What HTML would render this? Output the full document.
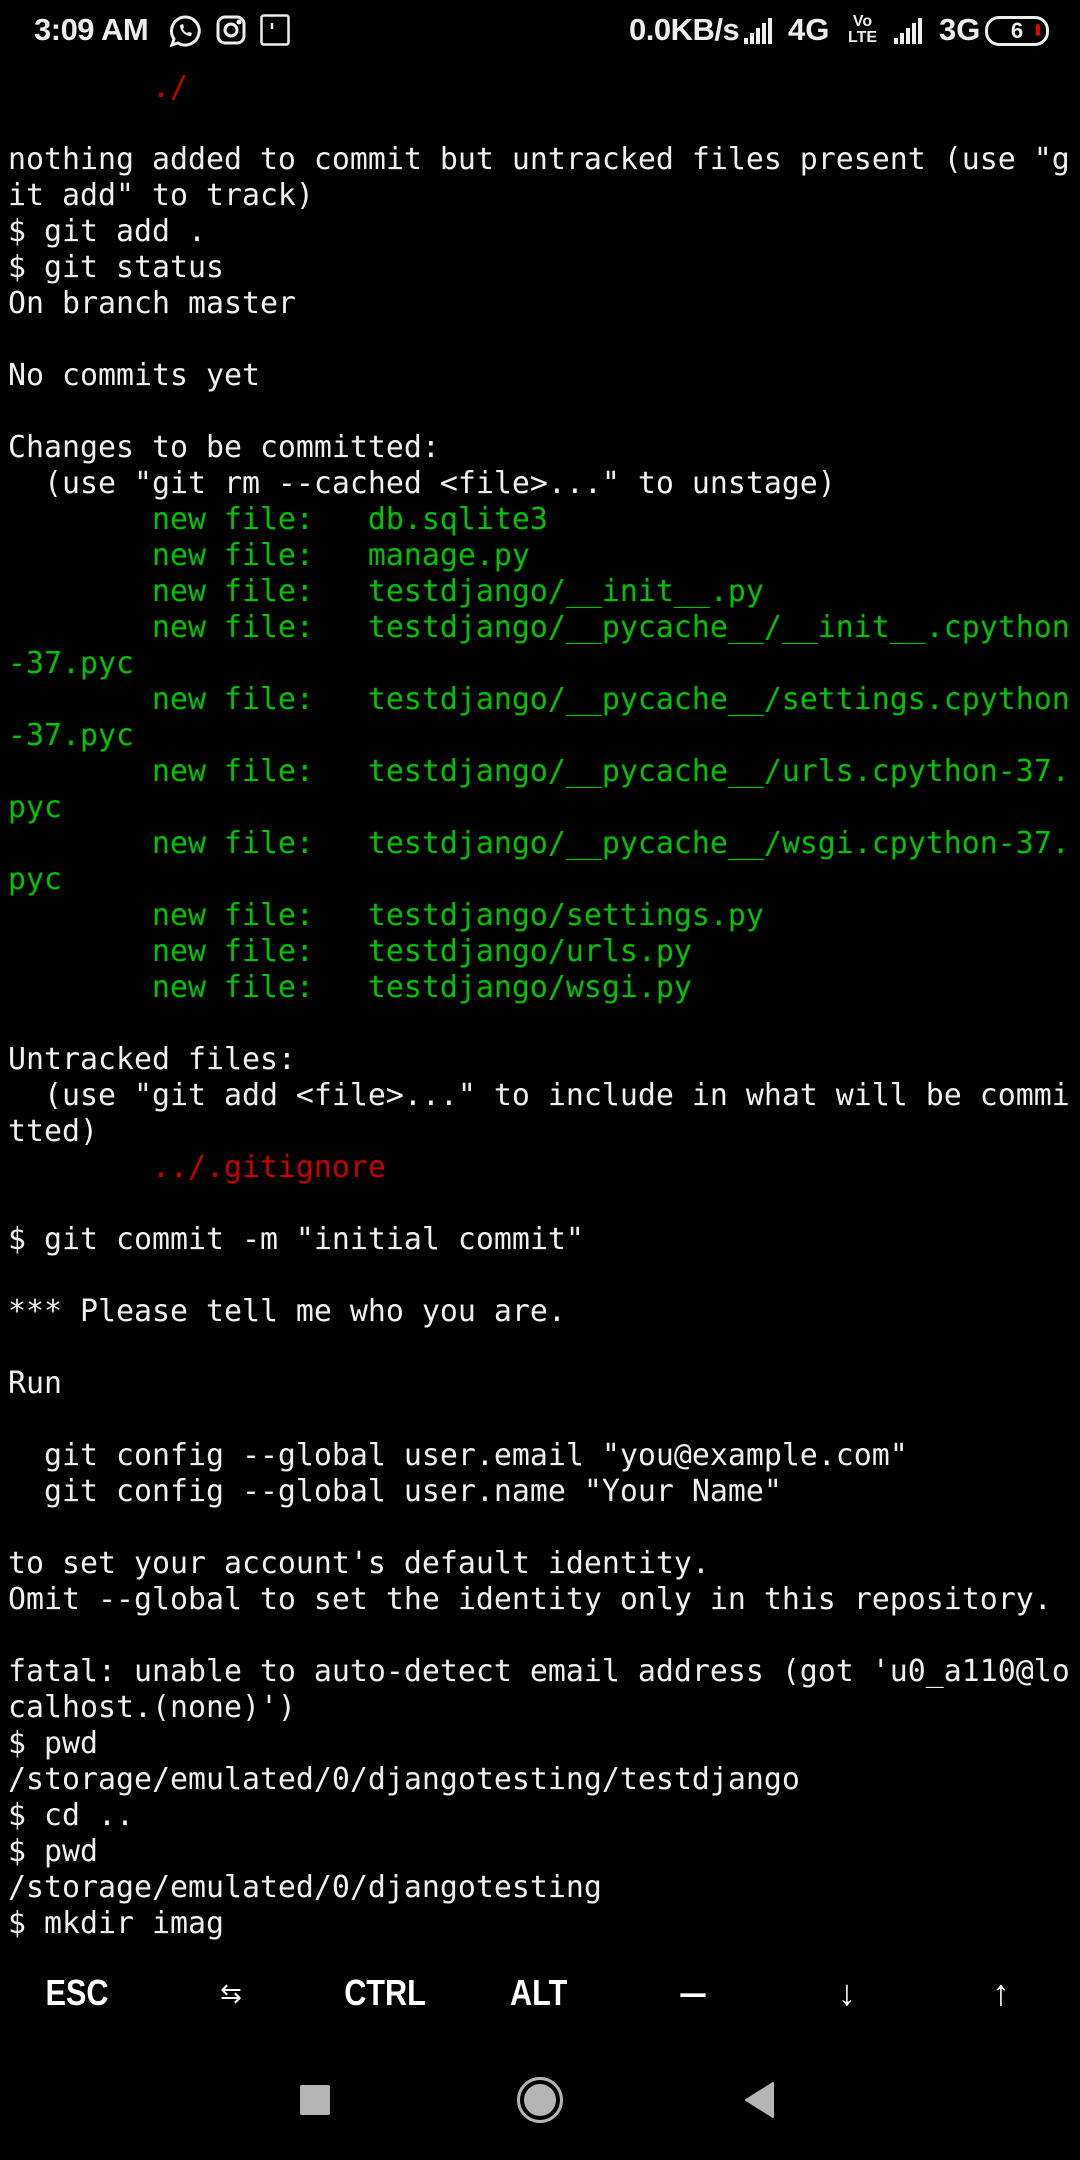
<!DOCTYPE html>
<html><head><meta charset="utf-8"><style>
html,body{margin:0;padding:0;background:#000;}
body{width:1080px;height:2160px;position:relative;overflow:hidden;font-family:"Liberation Sans",sans-serif;color:#fff;}
pre{position:absolute;left:8px;top:70px;margin:0;font-family:"DejaVu Sans Mono","Liberation Mono",monospace;font-size:29.9px;line-height:36px;color:#f0f0f0;}
.g{color:#00c400}.r{color:#c80000}
.sb{position:absolute;top:10px;height:40px;font-size:31px;font-weight:bold;color:#eee;line-height:40px;}
.k{position:absolute;top:1970px;width:154px;text-align:center;font-size:36px;font-weight:bold;line-height:46px;color:#fff;}
.k span{display:inline-block;transform:scaleX(0.85);}
</style></head><body>
<div class="sb" style="left:34px;letter-spacing:-0.5px">3:09 AM</div>
<svg style="position:absolute;left:168px;top:14px" width="34" height="34" viewBox="0 0 34 34" fill="none" stroke="#eee" stroke-width="3"><path d="M17 3a14 14 0 1 1-7 26l-6 2 2-6A14 14 0 0 1 17 3z"/><path d="M12 11c0 6 5 11 11 11l1-3-3-1-2 1c-2-1-3-2-4-4l1-2-1-3z" fill="#eee" stroke="none"/></svg>
<svg style="position:absolute;left:216px;top:15px" width="30" height="30" viewBox="0 0 30 30" fill="none" stroke="#eee" stroke-width="3"><rect x="2" y="2" width="26" height="26" rx="7"/><circle cx="15" cy="15" r="6"/><circle cx="23" cy="7" r="1" fill="#eee"/></svg>
<svg style="position:absolute;left:260px;top:14px" width="30" height="32" viewBox="0 0 30 32" fill="none" stroke="#eee" stroke-width="2.5"><rect x="1.5" y="1.5" width="27" height="29" rx="2"/><path d="M12 9v6"/></svg>
<div class="sb" style="left:629px;letter-spacing:-0.5px">0.0KB/s</div>
<svg style="position:absolute;left:744px;top:16px" width="36" height="28" viewBox="0 0 36 28" fill="#eee"><rect x="0" y="22" width="4" height="6"/><rect x="6" y="17" width="4" height="11"/><rect x="12" y="12" width="4" height="16"/><rect x="18" y="7" width="4" height="21"/><rect x="24" y="2" width="4" height="26"/></svg>
<div class="sb" style="left:788px">4G</div>
<div style="position:absolute;left:848px;top:14px;font-size:16px;font-weight:bold;line-height:16px;color:#eee;text-align:center">Vo<br>LTE</div>
<svg style="position:absolute;left:894px;top:16px" width="36" height="28" viewBox="0 0 36 28" fill="#eee"><rect x="0" y="22" width="4" height="6"/><rect x="6" y="17" width="4" height="11"/><rect x="12" y="12" width="4" height="16"/><rect x="18" y="7" width="4" height="21"/><rect x="24" y="2" width="4" height="26"/></svg>
<div class="sb" style="left:939px">3G</div>
<div style="position:absolute;left:985px;top:16px;width:58px;height:24px;border:3px solid #eee;border-radius:14px;color:#eee;font-size:22px;font-weight:bold;line-height:24px;text-align:center">6</div>
<div style="position:absolute;left:1036px;top:24px;width:4px;height:12px;background:#e00;border-radius:2px"></div>
<pre><span class="r">        ./</span>

nothing added to commit but untracked files present (use "g
it add" to track)
$ git add .
$ git status
On branch master

No commits yet

Changes to be committed:
  (use "git rm --cached &lt;file&gt;..." to unstage)
<span class="g">        new file:   db.sqlite3
        new file:   manage.py
        new file:   testdjango/__init__.py
        new file:   testdjango/__pycache__/__init__.cpython
-37.pyc
        new file:   testdjango/__pycache__/settings.cpython
-37.pyc
        new file:   testdjango/__pycache__/urls.cpython-37.
pyc
        new file:   testdjango/__pycache__/wsgi.cpython-37.
pyc
        new file:   testdjango/settings.py
        new file:   testdjango/urls.py
        new file:   testdjango/wsgi.py</span>

Untracked files:
  (use "git add &lt;file&gt;..." to include in what will be commi
tted)
<span class="r">        ../.gitignore</span>

$ git commit -m "initial commit"

*** Please tell me who you are.

Run

  git config --global user.email "you@example.com"
  git config --global user.name "Your Name"

to set your account's default identity.
Omit --global to set the identity only in this repository.

fatal: unable to auto-detect email address (got 'u0_a110@lo
calhost.(none)')
$ pwd
/storage/emulated/0/djangotesting/testdjango
$ cd ..
$ pwd
/storage/emulated/0/djangotesting
$ mkdir imag</pre>
<div class="k" style="left:0"><span>ESC</span></div>
<div class="k" style="left:154px;font-size:26px;font-weight:normal">⇆</div>
<div class="k" style="left:308px"><span>CTRL</span></div>
<div class="k" style="left:462px"><span>ALT</span></div>
<div class="k" style="left:616px"><span style="transform:scaleX(0.7)">—</span></div>
<div class="k" style="left:770px;font-weight:normal">↓</div>
<div class="k" style="left:924px;font-weight:normal">↑</div>
<div style="position:absolute;left:300px;top:2085px;width:30px;height:30px;background:#b4b4b4;border-radius:2px"></div>
<div style="position:absolute;left:517px;top:2077px;width:40px;height:40px;border:3px solid #b4b4b4;border-radius:50%"></div>
<div style="position:absolute;left:524px;top:2084px;width:32px;height:32px;background:#b4b4b4;border-radius:50%"></div>
<svg style="position:absolute;left:744px;top:2082px" width="30" height="36" viewBox="0 0 30 36"><path d="M29 1L2 18l27 17z" fill="#b4b4b4" stroke="#b4b4b4" stroke-linejoin="round" stroke-width="2"/></svg>
</body></html>
